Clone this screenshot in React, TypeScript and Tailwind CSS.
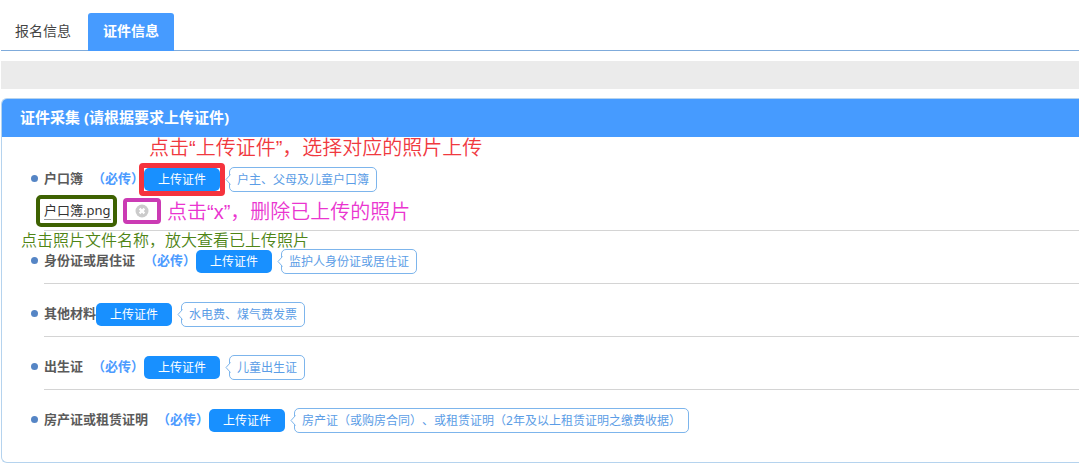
import type { ReactNode } from "react";

type Doc = {
  name: string;
  required: boolean;
  hint: string;
};

const documents: Doc[] = [
  { name: "户口簿", required: true, hint: "户主、父母及儿童户口簿" },
  { name: "身份证或居住证", required: true, hint: "监护人身份证或居住证" },
  { name: "其他材料", required: false, hint: "水电费、煤气费发票" },
  { name: "出生证", required: true, hint: "儿童出生证" },
  {
    name: "房产证或租赁证明",
    required: true,
    hint: "房产证（或购房合同）、或租赁证明（2年及以上租赁证明之缴费收据）",
  },
];

function Hint({ children }: { children: ReactNode }) {
  return (
    <span className="relative ml-[9px] flex h-[25px] items-center whitespace-nowrap rounded-[5px] border border-[#7db5ec] px-[7px] text-[12px] text-[#5b9de6]">
      <svg
        className="absolute top-[6px] -left-[5px] h-[11px] w-[6px]"
        viewBox="0 0 6 11"
        aria-hidden="true"
      >
        <path d="M6 0.5H5.5L1 5.5L5.5 10.5H6Z" fill="#fff" />
        <path d="M5.5 0.5L1 5.5L5.5 10.5" fill="none" stroke="#7db5ec" />
      </svg>
      {children}
    </span>
  );
}

function UploadedFile() {
  return (
    <div className="flex h-[29px] items-center pt-[8px]">
      <span className="relative">
        <a
          href="#preview"
          className="block border-b border-[#999] text-[13px] leading-[17px] text-[#333]"
        >
          户口簿.png
        </a>
        <span className="pointer-events-none absolute -inset-y-[7px] -right-[6px] -left-2 rounded-[5px] border-4 border-[#3e6202]" />
      </span>
      <span className="relative ml-6 flex">
        <button type="button" aria-label="删除" className="h-[14px] w-[14px]">
          <svg viewBox="0 0 14 14" className="h-[14px] w-[14px]">
            <circle cx="7" cy="7" r="6.5" fill="#cbcbcb" />
            <path d="M4.6 4.6L9.4 9.4M9.4 4.6L4.6 9.4" stroke="#fff" strokeWidth="2.2" />
          </svg>
        </button>
        <span className="pointer-events-none absolute -inset-x-3 -inset-y-[6px] rounded-[4px] border-4 border-[#cb3bb4]" />
      </span>
    </div>
  );
}

function DocumentRow({ doc, first, last }: { doc: Doc; first: boolean; last: boolean }) {
  return (
    <li className="flex">
      <span className="mt-[26px] mr-[6px] h-[7px] w-[7px] shrink-0 rounded-full bg-[#5585c5]" />
      <div
        className={
          last ? "flex-1 pt-[18px] pb-[29px]" : "flex-1 border-b border-[#d4d4d4] pt-[18px] pb-[9px]"
        }
      >
        <div className="flex items-center">
          <span className="pb-[2px] text-[13px] font-bold text-[#5a5a5a]">{doc.name}</span>
          {doc.required && (
            <span className="ml-[9px] pb-[2px] text-[13px] font-bold text-[#4d9bff]">（必传）</span>
          )}
          <span className="relative">
            <button
              type="button"
              className="flex h-[23px] w-[76px] items-center justify-center rounded-[5px] bg-[#1890ff] text-[12px] text-white"
            >
              上传证件
            </button>
            {first && (
              <span className="pointer-events-none absolute -inset-[5px] rounded-[4px] border-[5px] border-[#f5333d]" />
            )}
          </span>
          <Hint>{doc.hint}</Hint>
        </div>
        {first && <UploadedFile />}
      </div>
    </li>
  );
}

export default function App() {
  return (
    <main className="bg-white px-px pt-[13px] font-['Noto_Sans','Noto_Sans_CJK_SC',sans-serif] text-[#333] [text-spacing-trim:space-all]">
      <nav className="flex h-[38px] border-b border-[#7fabdb] text-[14px]">
        <button type="button" className="h-[38px] pr-[17px] pb-[3px] pl-[14px] text-[#444]">
          报名信息
        </button>
        <button
          type="button"
          className="h-[38px] rounded-t-[3px] bg-[#469bff] px-[15px] pb-[3px] font-bold text-white"
        >
          证件信息
        </button>
      </nav>

      <div className="mt-[10px] h-[28px] bg-[#ebebeb]" />

      <section className="relative mt-[9px] rounded-l-[6px] border border-r-0 border-[#b5d3ee]">
        <h2 className="flex h-[38px] items-center rounded-tl-[5px] bg-[#469bff] pb-[2px] pl-[18px] text-[15px] font-bold text-white">
          证件采集 (请根据要求上传证件)
        </h2>
        <ul className="pt-3 pl-[29px]">
          {documents.map((doc, i) => (
            <DocumentRow
              key={doc.name}
              doc={doc}
              first={i === 0}
              last={i === documents.length - 1}
            />
          ))}
        </ul>

        <p className="pointer-events-none absolute top-[36px] left-[147px] whitespace-nowrap font-['Liberation_Sans','Noto_Sans_CJK_SC',sans-serif] text-[20px] leading-[26px] font-[350] text-[#f0393f]">
          点击“上传证件”，选择对应的照片上传
        </p>
        <p className="pointer-events-none absolute top-[100px] left-[165px] whitespace-nowrap font-['Liberation_Sans','Noto_Sans_CJK_SC',sans-serif] text-[20px] leading-[26px] font-[350] text-[#ea35d0]">
          点击“x”，删除已上传的照片
        </p>
        <p className="pointer-events-none absolute top-[130px] left-[19px] whitespace-nowrap text-[16px] leading-[22px] font-[350] text-[#4f8516]">
          点击照片文件名称，放大查看已上传照片
        </p>
      </section>
    </main>
  );
}
